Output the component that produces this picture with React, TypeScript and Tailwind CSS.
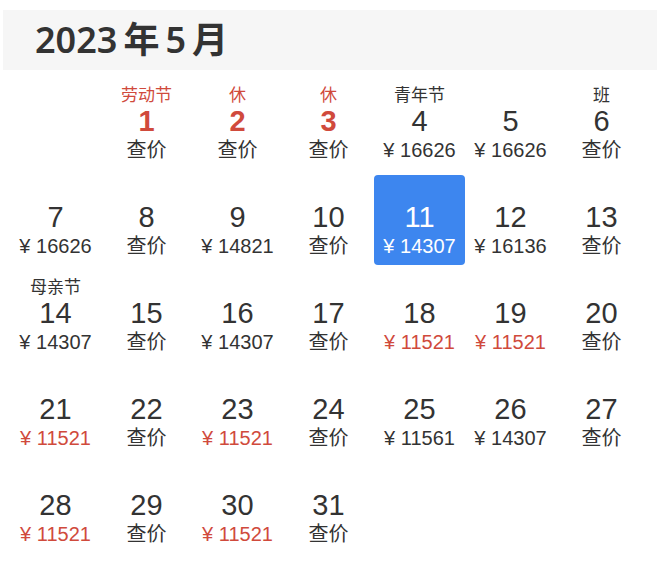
import React from 'react'

type Day = {
  day: number
  label?: string
  labelRed?: boolean
  dayRed?: boolean
  price?: number
  priceRed?: boolean
}

const days: Day[] = [
  { day: 1, label: '劳动节', labelRed: true, dayRed: true },
  { day: 2, label: '休', labelRed: true, dayRed: true },
  { day: 3, label: '休', labelRed: true, dayRed: true },
  { day: 4, label: '青年节', price: 16626 },
  { day: 5, price: 16626 },
  { day: 6, label: '班' },
  { day: 7, price: 16626 },
  { day: 8 },
  { day: 9, price: 14821 },
  { day: 10 },
  { day: 11, price: 14307 },
  { day: 12, price: 16136 },
  { day: 13 },
  { day: 14, label: '母亲节', price: 14307 },
  { day: 15 },
  { day: 16, price: 14307 },
  { day: 17 },
  { day: 18, price: 11521, priceRed: true },
  { day: 19, price: 11521, priceRed: true },
  { day: 20 },
  { day: 21, price: 11521, priceRed: true },
  { day: 22 },
  { day: 23, price: 11521, priceRed: true },
  { day: 24 },
  { day: 25, price: 11561 },
  { day: 26, price: 14307 },
  { day: 27 },
  { day: 28, price: 11521, priceRed: true },
  { day: 29 },
  { day: 30, price: 11521, priceRed: true },
  { day: 31 },
]

const SELECTED = 11
const font = { fontFamily: '"Liberation Sans", "Noto Sans CJK SC", sans-serif' }

function DayCell({ d }: { d: Day }) {
  const selected = d.day === SELECTED
  const base = selected ? 'text-white' : 'text-[#333333]'

  return (
    <div
      className={`h-[90px] flex flex-col items-center pt-[7px] rounded-[4px] ${
        selected ? 'bg-[#3d86ef]' : ''
      }`}
    >
      <div
        className={`h-[20px] leading-[20px] text-[17px] ${
          d.labelRed ? 'text-[#d04a3c]' : base
        }`}
      >
        {d.label ?? ''}
      </div>
      <div
        className={`h-[31px] leading-[31px] text-[29px] ${
          d.dayRed ? 'text-[#d04a3c] font-bold' : base
        }`}
      >
        {d.day}
      </div>
      <div
        className={`h-[27px] leading-[27px] text-[20px] whitespace-nowrap ${
          d.priceRed ? 'text-[#d04a3c]' : base
        }`}
      >
        {d.price ? `¥ ${d.price}` : '查价'}
      </div>
    </div>
  )
}

export default function App() {
  return (
    <div className="w-[660px] h-[562px] bg-white pt-[10px] overflow-hidden" style={font}>
      <div className="mx-[3px] h-[60px] bg-[#f6f6f6] flex items-center pl-[32px]">
        <span
          className="text-[36px] font-semibold text-[#333333]"
          style={{ fontFamily: '"Noto Sans", "Noto Sans CJK SC", sans-serif' }}
        >
          2023<span className="mx-[6px]">年</span>5<span className="ml-[6px]">月</span>
        </span>
      </div>

      <div className="grid grid-cols-7 w-[637px] ml-[10px] mt-[9px] gap-y-[6px]">
        <div />
        {days.map((d) => (
          <DayCell key={d.day} d={d} />
        ))}
      </div>
    </div>
  )
}
